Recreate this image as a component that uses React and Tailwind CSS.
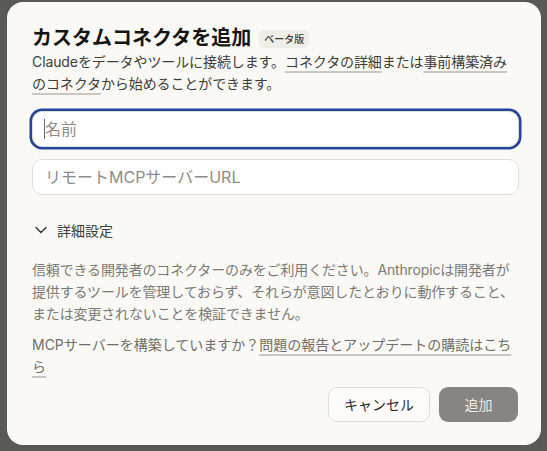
import React from "react";

// underlined inline link used in the dialog copy
const TextLink = ({ children }) => (
  <a
    href="#"
    className="underline decoration-[#c9c7bf] decoration-[1.5px] underline-offset-[4px]"
  >
    {children}
  </a>
);

const ChevronDown = () => (
  <svg width="12" height="8" viewBox="0 0 12 8" fill="none" className="text-[#2d2d2b]">
    <path d="M1 1.5 L6 6.5 L11 1.5" stroke="currentColor" strokeWidth="1.3" strokeLinecap="round" strokeLinejoin="round" />
  </svg>
);

export default function App() {
  return (
    <div className="w-[547px] h-[451px] overflow-hidden bg-[#595957] pt-[2px] pl-[7px] font-['Inter','Noto_Sans_CJK_JP',sans-serif]">
      <div className="w-[534px] h-[443px] rounded-[16px] bg-[#faf9f5] pt-6 pl-[25px] pr-[22px] flex flex-col">
        {/* header */}
        <div className="flex items-center gap-[8px] h-[25px]">
          <h2 className="text-[20px] leading-[25px] font-bold text-[#141413]">カスタムコネクタを追加</h2>
          <span className="h-[18px] px-[5px] rounded-[5px] bg-[#eeede8] text-[10px] leading-[18px] text-[#3a3a38] font-medium">
            ベータ版
          </span>
        </div>
        <p className="text-[14px] leading-[22px] tracking-[-0.1px] text-[#3d3d3a]">
          Claudeをデータやツールに接続します。<TextLink>コネクタの詳細</TextLink>または
          <TextLink>事前構築済みのコネクタ</TextLink>から始めることができます。
        </p>

        {/* fields */}
        <div className="mt-4 flex flex-col gap-3">
          <div className="relative">
            <input
              type="text"
              placeholder="名前"
              className="h-9 w-full rounded-[10px] border border-[#e2e0d9] bg-white px-3 text-[16px] text-[#141413] placeholder:text-[#8d8c87] outline-none shadow-[0_0_0_2.5px_#23449b]"
            />
            <span className="absolute left-[12px] top-[8px] h-[20px] w-px bg-[#6b6a66]" />
          </div>
          <input
            type="text"
            placeholder="リモートMCPサーバーURL"
            className="h-9 w-full rounded-[10px] border border-[#e2e0d9] bg-white px-3 text-[16px] text-[#141413] placeholder:text-[#8d8c87] outline-none"
          />
        </div>

        <button className="mt-[25px] flex items-center gap-[10px] h-5 pl-[3px] text-[14px] text-[#3d3d3a] self-start">
          <ChevronDown />
          詳細設定
        </button>

        <p className="mt-[19px] text-[14px] leading-[22px] tracking-[-0.15px] text-[#7a7974]">
          信頼できる開発者のコネクターのみをご利用ください。Anthropicは開発者が提供するツールを管理しておらず、それらが意図したとおりに動作すること、または変更されないことを検証できません。
        </p>

        <p className="mt-[9px] text-[14px] leading-[22px] text-[#6f6e69]">
          MCPサーバーを構築していますか？<TextLink>問題の報告とアップデートの購読はこちら</TextLink>
        </p>

        {/* actions */}
        <div className="mt-[9px] flex justify-end gap-[9px] pr-px">
          <button className="h-[35px] w-[102px] rounded-[9px] border border-[#dddbd3] bg-[#fdfcfa] text-[14px] text-[#2b2b29]">
            キャンセル
          </button>
          <button className="h-[35px] w-[79px] rounded-[9px] bg-[#868581] text-[14px] text-[#ecebe7]">
            追加
          </button>
        </div>
      </div>
    </div>
  );
}
